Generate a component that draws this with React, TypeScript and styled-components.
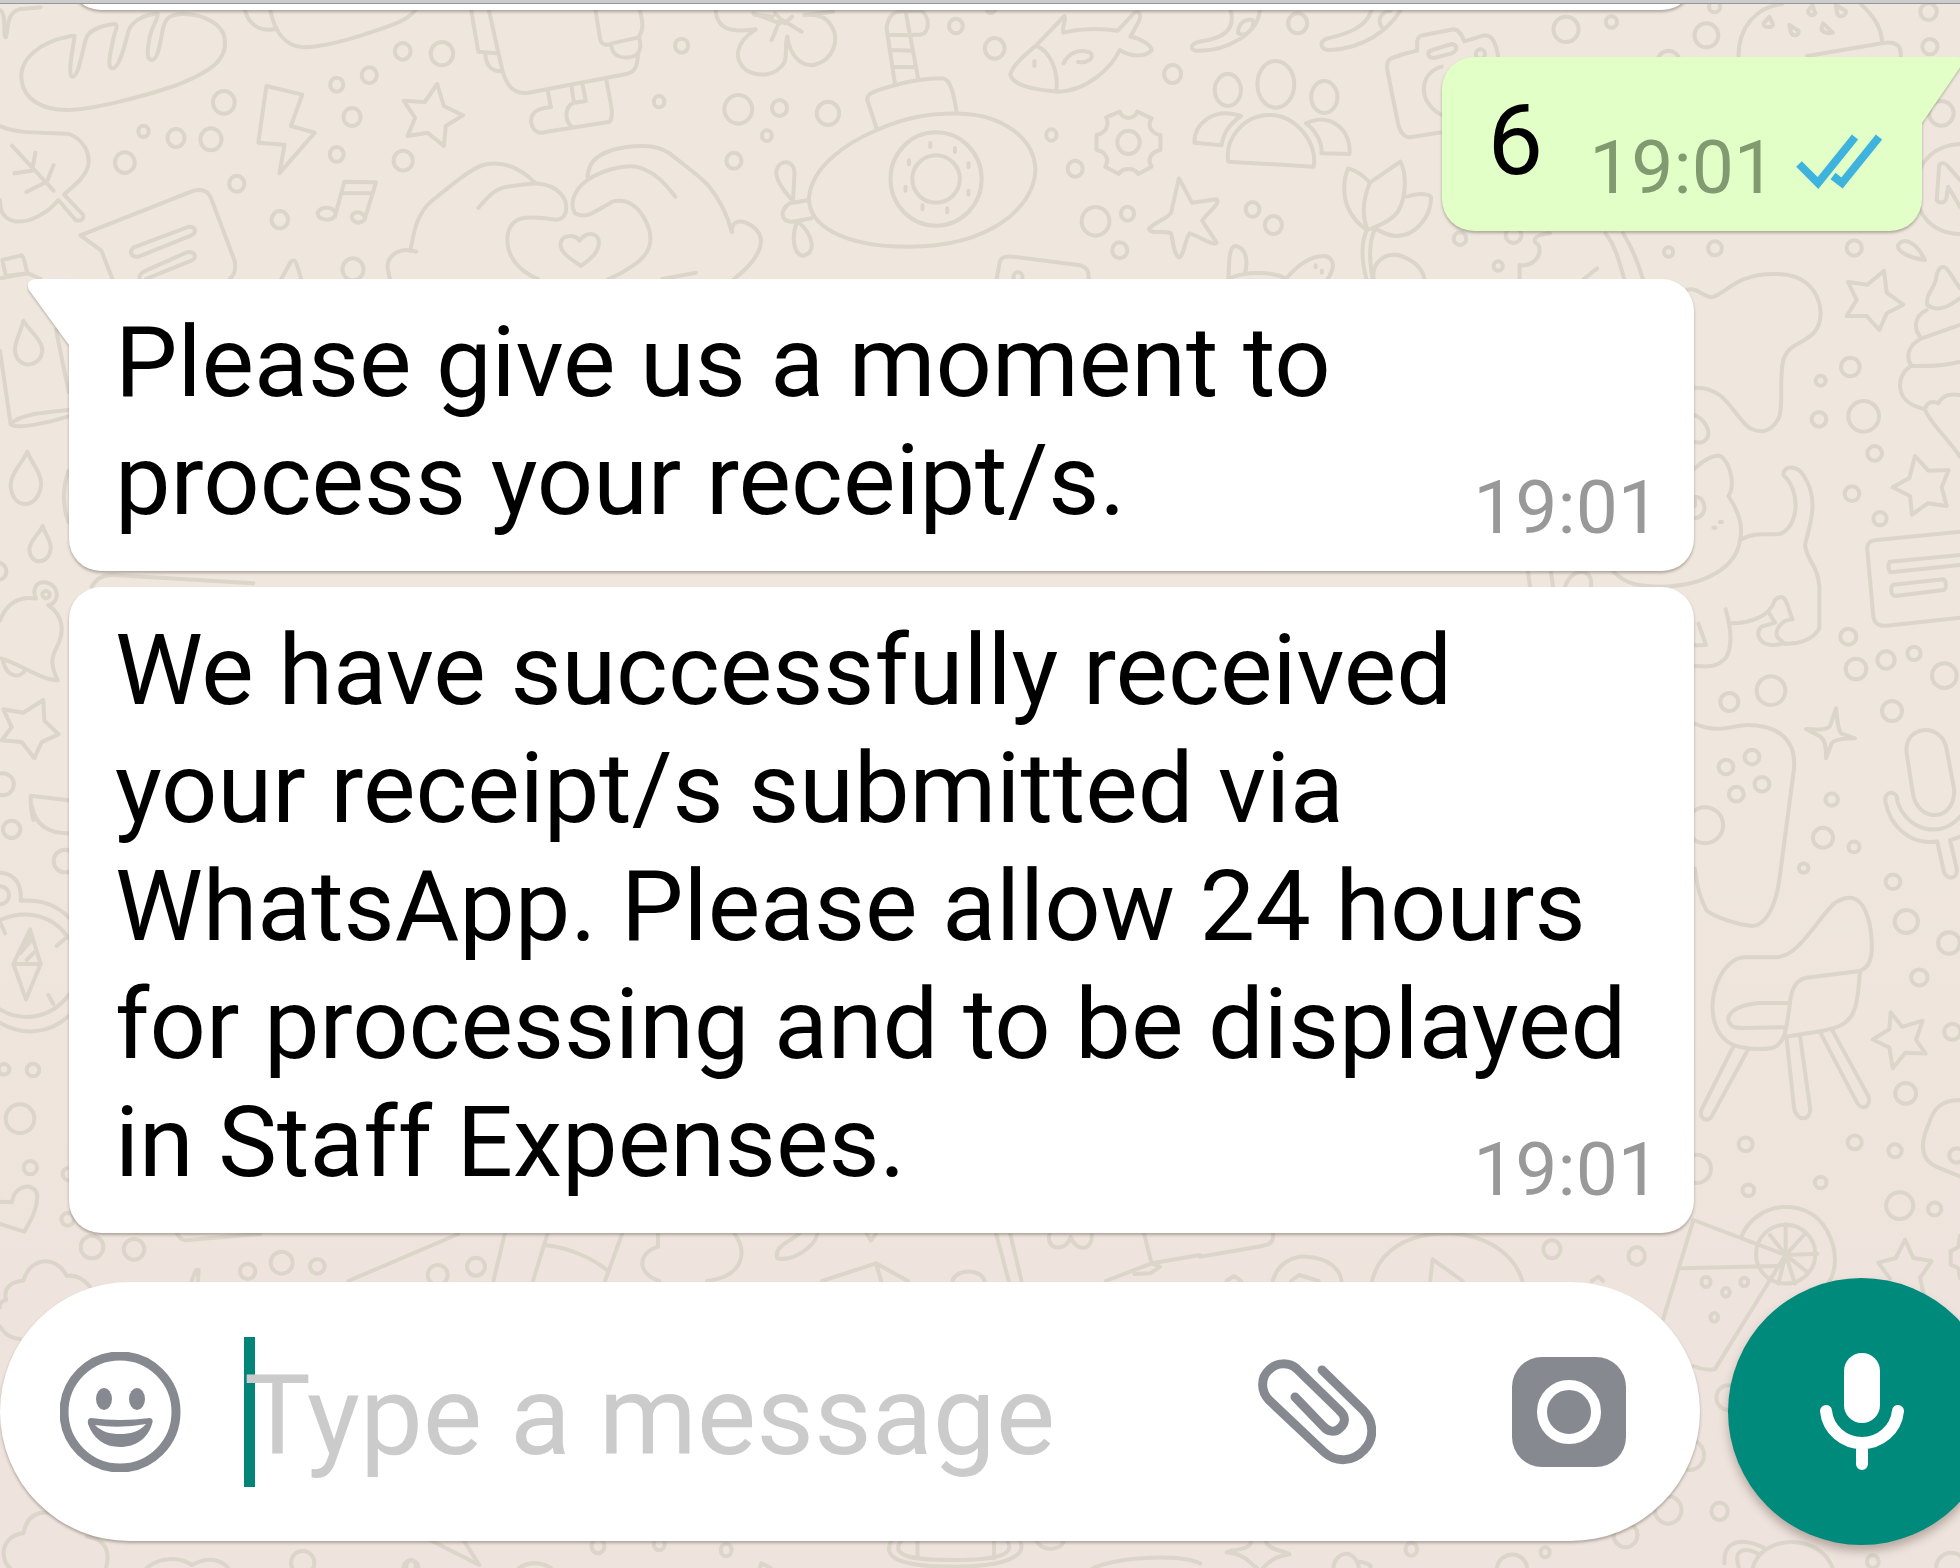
import React from "react";
import styled, { createGlobalStyle } from "styled-components";

const GlobalStyle = createGlobalStyle`
  * { box-sizing: border-box; }
  body {
    margin: 0;
    font-family: Roboto, "Liberation Sans", sans-serif;
    background: #efe6dd;
  }
`;

/* ---------- wallpaper ---------- */

type Bubble = [x: number, y: number, r: number];

interface Patch {
  x: number;
  y: number;
  sx: number;
  sy: number;
  lines: string[];
  bubbles: Bubble[];
}

const T = 1 / 3;

const patches: Patch[] = [
  {
    x: 0, y: 0, sx: 0.4783, sy: T,
    lines: [
      "M150 108C80 125 40 180 45 240C50 300 90 330 140 330C190 330 300 290 370 255C440 215 475 180 470 120C468 70 420 40 380 42C350 44 345 60 340 90C335 130 330 180 318 180C306 180 308 150 312 120C316 80 330 60 330 42C300 42 275 65 268 95C262 130 250 205 235 205C222 205 232 150 238 110C241 90 250 72 238 72C205 78 185 95 180 115C172 150 165 230 152 230C140 230 152 150 156 108Z",
      "M0 30C15 40 5 110 12 112C18 90 12 40 40 28L85 22",
      "M512 30C520 75 545 95 572 88M565 30C572 80 590 140 635 142C690 140 760 105 810 80C850 60 860 45 870 28",
      "M557 258L632 284L608 378L658 398L584 520L595 434L540 428Z",
      "M914 252L928 318L968 346L932 378L928 438L894 398L852 408L868 354L844 302L888 306Z",
      "M985 30L1000 155L1038 160M1022 30L1050 210C1058 250 1070 285 1105 278L1310 222C1330 215 1332 195 1334 165M1015 162C1015 190 1025 215 1048 214M1245 30L1255 120C1258 135 1270 138 1280 130L1335 112C1350 80 1340 50 1338 30M1278 136C1280 165 1295 175 1315 172C1340 168 1342 140 1336 112",
      "M1145 272L1152 322C1120 325 1110 340 1110 365C1115 395 1125 402 1140 396L1275 365C1285 345 1275 300 1268 242M1195 262L1200 308C1180 320 1180 360 1195 380M1218 255L1225 303L1200 308",
      "M0 378C40 405 100 395 145 402C175 420 190 460 184 500C175 540 150 560 134 584L174 645C175 660 168 664 158 660L122 600C100 640 60 670 30 664C5 655 0 630 0 600M25 437L112 572M74 458L67 512L30 520M112 495L98 545L55 576",
      "M235 837L212 752L168 706L405 572C425 565 435 575 440 590L490 780C495 810 490 825 480 837M280 742L395 680C412 680 410 700 400 706L290 770C272 772 270 752 280 742ZM292 837C290 825 295 818 305 812L392 756C410 755 412 775 400 782L305 837",
      "M5 780L45 766C52 770 52 800 58 820L12 828ZM0 835L58 820C70 825 75 832 85 837",
      "M700 650L720 545L786 547L762 660M714 580L774 580M700 650C690 665 665 660 664 640C668 620 695 615 702 640M762 660C745 680 730 655 738 642C748 630 762 640 763 655",
      "M588 837L608 785C614 778 618 782 620 792L630 837M1385 837L1455 818",
      "M858 752C865 700 870 640 905 600C940 560 980 510 1010 495C1050 480 1085 500 1120 550C1170 555 1190 600 1182 640C1175 665 1160 660 1140 655C1100 648 1070 650 1062 700C1055 760 1080 810 1125 837M1000 624C1020 590 1035 565 1060 560C1085 555 1105 552 1120 550M870 755C840 740 812 760 810 800L815 837",
      "M1228 530C1232 490 1240 470 1280 450C1320 435 1370 430 1400 460C1430 495 1460 525 1480 555C1500 590 1520 640 1530 695M1228 540C1260 510 1300 495 1330 500C1370 515 1390 550 1412 590M1228 540C1200 570 1190 610 1202 640C1225 660 1250 630 1280 605C1310 595 1330 615 1345 650C1370 710 1365 760 1320 800C1305 815 1285 830 1272 837",
      "M1215 798C1190 775 1170 755 1172 730C1175 705 1200 700 1212 722C1225 695 1250 695 1252 725C1252 760 1235 775 1215 798Z",
    ],
    bubbles: [
      [842, 154, 28], [924, 161, 38], [772, 226, 27], [704, 254, 24], [736, 351, 30], [704, 463, 25],
      [843, 482, 33], [468, 307, 37], [300, 394, 20], [368, 414, 30], [441, 418, 36], [261, 488, 34],
      [495, 551, 27], [585, 659, 29], [738, 808, 36], [1425, 137, 24], [1378, 305, 20],
    ],
  },
  {
    x: 700, y: 0, sx: 0.4847, sy: T,
    lines: [
      "M32 30C35 80 55 100 115 88C70 130 70 180 95 210C125 235 160 225 175 185C180 150 175 130 180 110C185 160 205 200 235 195C275 180 290 120 270 75C260 50 240 42 215 45L275 35M165 60L148 120M170 60L210 95M112 44L150 50M155 40L175 70L190 50M110 40L165 70",
      "M402 250L385 85C388 45 400 33 420 34L455 32C475 45 475 100 455 104L440 104M425 40L450 236M390 104L440 106M395 150L440 152M400 200L446 202",
      "M365 388L345 300C345 285 350 280 365 272C410 250 460 235 500 235C520 238 525 300 530 340",
      "M225 590C232 500 300 430 365 390C420 355 470 338 540 341C620 345 690 410 692 510C690 620 600 740 430 740C300 740 222 680 225 590Z",
      "M393 537A94 140 0 1 1 581 537A94 140 0 1 1 393 537ZM438 537A49 71 0 1 1 536 537A49 71 0 1 1 438 537Z",
      "M475 429v12M526 444v12M554 490v12M554 572v12M510 625v12M459 616v12M424 560v12M431 481v12M690 184v14",
      "M190 600C165 560 155 530 158 510C165 475 195 480 195 520L192 600M225 600L185 610C165 630 165 665 190 665L230 655M200 668C190 700 190 760 212 768C240 760 235 710 205 668",
      "M693 137L752 48C757 60 745 85 750 98C780 85 830 85 862 92L895 40C905 30 912 40 905 65L888 110C910 115 930 135 932 150C920 172 890 172 866 150C850 200 800 275 735 275C710 270 650 265 640 225C645 195 670 165 693 137C725 155 740 220 735 275M750 190C760 160 780 145 805 158C815 175 800 190 780 186",
      "M1095 32C1105 90 1080 115 1030 125C1010 132 1010 155 1030 152C1090 152 1150 100 1155 32M1110 100C1110 70 1125 55 1140 60C1145 80 1135 100 1120 105ZM1385 32C1375 80 1340 100 1295 115C1275 125 1280 150 1300 150C1370 145 1420 90 1445 32M1408 85C1395 60 1405 35 1425 32",
      "M866 335C872 360 896 360 902 335L932 355C922 375 930 400 950 405L950 450C930 455 922 480 932 500L904 522C896 502 872 502 864 522L836 500C845 480 838 455 818 450L818 405C838 400 845 375 838 352Z",
      "M1062 270A27 48 0 1 1 1116 270A27 48 0 1 1 1062 270ZM1150 253A38 70 0 1 1 1226 253A38 70 0 1 1 1150 253ZM1261 291A27 48 0 1 1 1315 291A27 48 0 1 1 1261 291Z",
      "M1090 485C1082 420 1120 345 1175 345C1230 345 1275 430 1266 500ZM1020 428C1020 370 1060 320 1116 348C1090 375 1080 400 1076 436ZM1250 370C1300 335 1345 390 1340 462L1282 460C1285 430 1270 390 1250 370Z",
      "M1530 397L1465 412C1450 412 1444 395 1440 370L1418 210C1415 178 1425 172 1444 167",
      "M988 535L1015 608L1066 598C1075 612 1045 640 1036 662L1066 728C1060 740 1030 708 1010 700C1000 720 998 770 988 772C978 765 975 720 972 700C955 690 930 705 926 686C940 665 965 655 972 638Z",
      "M1382 548L1445 485C1458 520 1458 590 1440 635C1425 665 1395 680 1378 690C1362 640 1370 590 1382 548C1365 520 1350 510 1337 505C1322 560 1325 640 1376 690M1458 590C1480 578 1500 580 1508 590C1510 640 1480 710 1435 708C1415 705 1400 690 1396 688M1376 690C1362 730 1366 790 1375 837M1392 690C1378 730 1382 790 1388 837M1390 837C1385 790 1410 760 1440 765C1475 780 1490 805 1495 837",
      "M1090 837C1092 790 1090 740 1105 738C1130 745 1130 790 1124 820M1090 837C1120 815 1175 812 1210 835C1230 800 1260 765 1290 768C1315 780 1305 815 1295 837M1270 796v6M1283 812v6",
      "M612 837L618 790C620 770 630 768 645 770L780 795C800 800 802 815 802 837",
      "M66 695C65 665 80 660 95 668C130 690 135 730 110 780C95 810 80 825 70 837",
    ],
    bubbles: [
      [79, 328, 46], [164, 324, 27], [264, 340, 38], [138, 407, 19], [70, 482, 27], [528, 78, 25],
      [608, 145, 34], [975, 222, 30], [1233, 70, 33], [725, 405, 20], [774, 506, 27], [816, 664, 46],
      [882, 641, 24], [866, 751, 27], [1140, 628, 25], [1183, 675, 30], [884, 427, 38], [656, 832, 18],
      [600, 24, 18],
    ],
  },
  {
    x: 1400, y: 0, sx: 0.3571, sy: T,
    lines: [
      "M0 165L48 152L48 125C50 110 55 108 65 106L150 88C168 90 175 110 180 124L235 106C260 105 268 130 275 168M117 200C50 220 50 310 117 345M90 150L145 132C162 135 162 152 145 160L95 174C75 172 75 155 90 150Z",
      "M948 168C948 80 1000 20 1070 12M1290 12C1330 50 1350 90 1350 130L1140 168M1350 130C1385 122 1405 135 1402 168",
      "M1035 50L1045 75C1040 85 1015 82 1018 70ZM1155 15L1163 40C1155 50 1142 45 1143 32ZM1220 15L1248 32C1252 48 1230 55 1225 42ZM1090 75L1116 92C1118 108 1100 110 1095 98ZM1185 70L1212 98C1200 102 1180 98 1180 85Z",
      "M1568 432C1500 435 1450 480 1445 560C1440 640 1490 700 1568 702M1503 600L1510 495C1515 485 1530 490 1535 500L1568 540M1503 600C1510 612 1525 610 1530 595L1535 560L1568 620",
      "M420 700C370 705 370 725 388 735C400 770 370 800 335 795L335 837M575 700C605 740 615 790 628 837M625 700C650 745 668 790 680 837M515 837L552 805",
      "M1470 780C1430 775 1390 755 1395 735C1405 715 1440 715 1470 780Z",
    ],
    bubbles: [
      [225, 162, 17], [465, 88, 41], [592, 66, 20], [881, 20, 20], [858, 106, 39], [1480, 35, 28],
      [1484, 140, 26], [752, 185, 36], [1516, 340, 40], [168, 716, 22], [318, 705, 27], [275, 798, 17],
      [752, 756, 17], [882, 745, 24], [1272, 744, 26],
    ],
  },
  {
    x: 1660, y: 230, sx: T, sy: T,
    lines: [
      "M80 180C110 170 130 200 155 202C200 190 230 130 345 132C440 130 480 190 482 250C480 350 380 320 368 400C358 460 370 520 358 560C335 610 300 610 270 595C220 560 200 470 105 473",
      "M672 122L680 188L730 224L680 250L658 300L620 258L560 258L590 210L564 156L622 164Z",
      "M900 175L860 115C845 105 835 115 830 135C828 175 795 190 802 225C830 245 860 235 900 205M800 240C760 260 760 300 785 325L900 285M785 325C745 345 735 380 755 408C800 408 850 410 900 395M750 410C705 440 710 510 770 530L795 538C800 515 820 512 835 520C850 495 870 490 900 495M795 538C810 580 860 620 900 680",
      "M105 715C130 690 165 670 185 680C215 710 225 770 205 798C240 850 250 890 240 930C230 1010 140 1065 10 1070M240 930C290 900 330 920 365 910C420 880 420 780 370 735C370 705 410 705 430 735C480 810 450 880 435 945C440 990 475 1010 478 1070L478 1195C460 1230 410 1245 370 1240C300 1260 280 1210 305 1190L345 1178L325 1145M213 1180C270 1180 330 1160 345 1110C380 1080 380 1130 398 1168C360 1170 340 1205 355 1225L375 1242M197 1138C215 1200 215 1250 200 1280C175 1310 150 1312 105 1308M115 1180L138 1245L105 1246",
      "M105 555C150 580 160 630 120 638L105 636M105 800C140 800 145 860 105 865M105 810v18M160 893h6M180 876h6",
      "M765 678L805 722L866 720L845 772L860 828L803 820L756 854L750 798L698 772L748 744Z",
      "M900 905L650 930C625 932 620 945 622 960L640 1160C645 1185 660 1188 680 1187L900 1163M900 975L690 995C683 1000 685 1025 692 1027L900 1005M700 1064L850 1048C860 1052 860 1075 852 1080L705 1098C692 1095 690 1070 700 1064Z",
      "M-396 1025L-390 1070M-327 1025L-321 1070M-285 1070C-265 1010 -200 1010 -207 1070M-140 1025C-100 1065 -60 1070 10 1070",
    ],
    bubbles: [
      [571, 411, 31], [482, 452, 18], [477, 568, 25], [611, 559, 49], [644, 670, 25], [576, 791, 25],
      [660, 866, 23], [565, 1220, 27], [588, 1317, 34], [678, 1290, 29], [762, 1270, 23], [853, 1337, 40],
      [333, 1382, 46], [208, 1416, 30], [696, 1443, 33],
    ],
  },
  {
    x: 1660, y: 700, sx: T, sy: 0.3827,
    lines: [
      "M105 62C180 90 220 65 260 65C350 65 410 100 402 180L358 470C345 550 310 595 270 590C230 585 170 570 140 550C120 520 110 490 105 440",
      "M528 22C532 60 535 80 545 88L585 100C540 100 520 105 514 115L498 152C498 120 495 105 480 95L438 76C480 78 500 78 510 68Z",
      "M740 140C730 60 850 60 860 130L882 230C890 320 770 325 758 240ZM900 358L870 366L890 440C895 470 860 470 852 450L832 370C750 380 690 330 676 265C672 235 715 235 712 265C740 340 840 365 900 305",
      "M250 672L350 672C420 670 480 560 525 530C570 505 610 510 630 590C640 650 640 695 600 708L440 726C410 730 395 750 390 790C380 860 375 905 330 910C290 915 250 910 220 902C170 880 155 840 158 790C165 720 210 675 250 672ZM600 708C595 770 590 800 575 825C550 855 520 858 485 865L378 880M385 792L300 792C250 795 205 810 205 835C210 855 225 857 250 857L375 855",
      "M222 902L125 1070C115 1095 145 1105 155 1088L265 912M380 885L402 1065C410 1105 455 1100 450 1065L420 878M480 868L590 1050C605 1075 635 1065 625 1035L515 860",
      "M692 816L726 854L788 838L768 888L797 924L736 922L698 962L688 908L638 887L688 860Z",
      "M900 1045C840 1045 820 1070 805 1110C780 1160 780 1200 830 1220L900 1245",
      "M245 1400C290 1310 440 1295 500 1385C535 1440 530 1490 505 1525M377 1450V1370M377 1450L432 1398M377 1450L472 1447M377 1450L442 1495M377 1450L405 1525M377 1450L355 1525M377 1450L330 1398",
      "M790 1550L780 1510L815 1466L760 1458L735 1410L708 1458L655 1470L690 1512",
      "M900 1400L895 1430L872 1440V1475L895 1485L900 1510",
    ],
    bubbles: [
      [135, 327, 50], [198, 175, 22], [276, 149, 22], [229, 246, 22], [306, 220, 22], [515, 260, 19],
      [489, 360, 29], [582, 384, 17], [431, 439, 15], [699, 475, 22], [739, 579, 33], [867, 635, 31],
      [778, 725, 24], [877, 867, 24], [737, 1028, 30], [257, 1161, 21], [584, 1156, 21], [705, 1178, 20],
      [482, 1261, 18], [265, 1281, 18], [110, 1225, 40], [719, 1321, 38], [824, 1330, 20], [890, 1190, 22],
      [377, 1448, 80],
    ],
  },
  {
    x: 0, y: 260, sx: T, sy: 0.3571,
    lines: [
      "M0 255L32 460M168 195L206 370M32 460C60 430 150 425 206 420M32 460C50 475 150 455 206 438",
      "M70 170C90 200 128 225 127 255C120 305 50 305 45 255C42 230 62 205 70 170ZM82 537C95 570 125 595 123 630C115 700 38 700 32 635C30 600 65 570 82 537ZM128 745C135 770 155 785 152 810C145 855 90 855 88 810C90 785 115 770 128 745Z",
      "M0 1010C20 960 60 940 108 948C95 920 110 900 138 903C180 910 180 960 145 967C190 995 195 1040 170 1085C150 1120 155 1140 173 1177C120 1175 60 1130 0 1115M8 1120C20 1170 60 1175 78 1145",
      "M130 1232L133 1290L176 1328L125 1350L103 1395L65 1350L5 1345L35 1308L10 1258L70 1268Z",
      "M206 1513L92 1500C92 1530 94 1550 100 1568M206 590C185 640 190 700 206 735M275 915C290 890 310 880 340 882L760 905",
    ],
    bubbles: [[138, 937, 13], [-8, 872, 28], [8, 1468, 34]],
  },
  {
    x: 0, y: 800, sx: T, sy: T,
    lines: [
      "M96 20C105 70 140 100 206 100M0 218C50 220 65 260 62 302C120 298 170 315 206 352M0 360C60 335 150 330 206 415M0 628C60 665 150 660 206 585M0 668C70 710 150 700 206 648",
      "M90 388L122 492L78 598L40 492ZM40 492H122M60 460L95 420M80 480L105 455M70 445L92 400M0 365L15 400M170 438L200 412M145 585L160 612",
      "M0 1205L36 1207C42 1150 110 1145 112 1190C110 1240 85 1270 73 1295L0 1272",
    ],
    bubbles: [
      [35, 88, 29], [195, 183, 37], [0, 286, 30], [12, 808, 19], [99, 810, 22], [60, 956, 46],
      [91, 1103, 23], [207, 1122, 22], [203, 1258, 22], [276, 1341, 37], [402, 1348, 34],
    ],
  },
  {
    x: 0, y: 1220, sx: T, sy: T,
    lines: [
      "M270 200C240 165 215 165 200 168C170 105 90 110 70 182C30 185 10 205 18 240C0 245 0 250 0 262M0 320C15 345 35 355 60 357",
      "M530 38C540 60 550 62 565 60L780 42M575 183L588 150L596 150L594 183M1045 183L1375 42",
      "M70 940C80 890 110 875 145 878M68 940C30 945 5 975 12 1010C15 1030 25 1040 30 1044M260 950C320 955 330 1000 318 1044M440 1044C480 1010 540 1010 575 1035C620 1010 660 1015 685 1044M1290 960L1438 1035L1390 960",
    ],
    bubbles: [
      [743, 154, 26], [845, 128, 36], [952, 139, 25], [1313, 165, 33], [1428, 140, 30], [908, 1028, 38],
      [1233, 1044, 26],
    ],
  },
  {
    x: 200, y: 1210, sx: 0.6378, sy: T,
    lines: [
      "M460 213L478 70M522 213L545 70M540 105C590 115 625 160 638 180M635 213L662 70M718 70L718 110C685 130 685 190 720 213M838 70C860 130 850 200 795 213M940 70C920 100 900 110 905 145C930 155 965 110 968 70M1045 70L1052 92L1060 70M975 213L1060 160L1110 213M1060 160L1068 213M1248 70L1268 213M1270 70L1288 213M1332 70C1325 125 1360 125 1365 80C1375 130 1400 120 1398 75M1480 70L1492 160L1568 135M1420 213L1492 160L1505 170L1490 190L1465 192M1180 213C1185 175 1225 175 1230 213",
      "M1085 990C1065 1050 1110 1070 1180 1070C1260 1070 1300 1040 1285 990M1100 990C1080 1040 1120 1050 1180 1050C1250 1050 1280 1035 1265 990M1125 990V1045M1245 990V1045M500 1074C515 1055 535 1055 550 1074M1400 1074C1450 1035 1540 1035 1568 1060M1310 990C1320 1025 1350 1025 1355 990M878 1074L880 1060L895 1074",
    ],
    bubbles: [[624, 1008, 25], [720, 1002, 22], [825, 1020, 22], [331, 1068, 20]],
  },
  {
    x: 1200, y: 1220, sx: 0.4847, sy: T,
    lines: [
      "M150 38C155 70 140 75 120 80L0 110M150 183C160 130 190 108 220 110C265 112 290 150 292 183M355 183C370 90 430 40 510 40C600 45 650 110 665 183M475 183L480 118L542 183M188 183L205 165L245 183M808 183L822 170L832 183M55 183L70 168L85 183",
      "M1018 0L1208 105L1062 448C1045 452 1030 445 1018 438M1018 0L955 300M990 145L1190 138",
      "M1140 1044C1160 940 1280 940 1305 1044M1165 985C1120 950 1080 960 1082 1030M1150 1000C1120 980 1100 990 1112 1044",
      "M105 962C110 990 60 990 55 997C100 1005 100 1030 118 1044M135 962C140 990 180 995 185 1003C150 1010 140 1030 130 1044M275 1044C280 990 320 985 328 1044M330 1025C350 1030 355 1040 352 1044M612 1044C620 990 670 990 675 1044",
    ],
    bubbles: [
      [726, 88, 30], [901, 108, 29], [1044, 186, 18], [1123, 186, 16], [1085, 217, 16], [1061, 292, 16],
      [1090, 533, 40], [1010, 705, 48], [966, 870, 44], [1072, 874, 29], [878, 945, 40], [1388, 1025, 22],
      [436, 988, 22], [712, 997, 18], [1550, 1045, 50],
    ],
  },
];

const WallpaperSvg = styled.svg`
  position: absolute;
  inset: 0;
  width: 100%;
  height: 100%;
  fill: none;
  stroke: #dbd5ca;
  stroke-width: 4;
  stroke-linecap: round;
  stroke-linejoin: round;

  path,
  ellipse {
    vector-effect: non-scaling-stroke;
  }
`;

function Wallpaper() {
  return (
    <WallpaperSvg viewBox="0 0 1960 1568" preserveAspectRatio="xMidYMid slice" aria-hidden="true">
      {patches.map((p) => (
        <g key={`${p.x}-${p.y}`} transform={`translate(${p.x} ${p.y}) scale(${p.sx} ${p.sy})`}>
          {p.lines.map((d) => (
            <path key={d} d={d} />
          ))}
          {p.bubbles.map(([cx, cy, r]) => (
            <ellipse key={`${cx}-${cy}`} cx={cx} cy={cy} rx={(r * p.sy) / p.sx - 3} ry={r - 3} />
          ))}
        </g>
      ))}
    </WallpaperSvg>
  );
}

/* ---------- layout ---------- */

const Screen = styled.div`
  position: relative;
  display: flex;
  flex-direction: column;
  min-height: 100vh;
  overflow: hidden;
  background: linear-gradient(#efe7dd, #efe6dd 50%, #eee3dd);
`;

const TopEdge = styled.header`
  position: relative;
  height: 4px;
  background: #cccccc;
  border-bottom: 1px solid #94989b;
`;

const Conversation = styled.main`
  position: relative;
  display: flex;
  flex-direction: column;
  flex: 1;
`;

const bubbleShadow = "0 2px 3px rgba(80, 70, 60, 0.4)";

const Clipped = styled.div`
  display: flex;
  flex-direction: column;
  justify-content: flex-end;
  height: 12px;
  padding: 0 266px 6px 69px;
  overflow: hidden;
`;

const EarlierMessage = styled.div`
  flex: none;
  height: 80px;
  border-radius: 32px;
  background: #ffffff;
  box-shadow: ${bubbleShadow};
`;

const MessageList = styled.ol`
  display: flex;
  flex-direction: column;
  margin: 0;
  padding: 41px 38px 0 69px;
  list-style: none;
`;

const Row = styled.li<{ $mine?: boolean; $gap: number }>`
  display: flex;
  justify-content: ${(p) => (p.$mine ? "flex-end" : "flex-start")};
  margin-bottom: ${(p) => p.$gap}px;
  padding-right: ${(p) => (p.$mine ? 0 : 228)}px;
`;

const Bubble = styled.article<{ $mine?: boolean; $tail?: boolean }>`
  position: relative;
  flex: ${(p) => (p.$mine ? "none" : 1)};
  padding: 24px ${(p) => (p.$mine ? 40 : 34)}px 26px 46px;
  border-radius: 32px;
  border-top-left-radius: ${(p) => (p.$tail && !p.$mine ? 0 : 32)}px;
  border-top-right-radius: ${(p) => (p.$tail && p.$mine ? 0 : 32)}px;
  background: ${(p) => (p.$mine ? "#e1ffc7" : "#ffffff")};
  box-shadow: ${bubbleShadow};
`;

const Tail = styled.svg<{ $mine?: boolean }>`
  position: absolute;
  top: 0;
  ${(p) => (p.$mine ? "left: 100%;" : "right: 100%;")}
  width: 42px;
  height: 68px;
  overflow: visible;
  fill: ${(p) => (p.$mine ? "#e1ffc7" : "#ffffff")};
  filter: drop-shadow(0 2px 1px rgba(80, 70, 60, 0.3));
  clip-path: ${(p) => (p.$mine ? "inset(0 -4px -4px 0)" : "inset(0 0 -4px -4px)")};
`;

const Body = styled.div`
  display: flow-root;
  color: #000000;
  font-size: 99px;
  line-height: 118px;
`;

const Meta = styled.span<{ $mine?: boolean }>`
  float: right;
  display: flex;
  align-items: center;
  gap: 20px;
  height: 76px;
  margin: 48px 0 0 46px;
  color: ${(p) => (p.$mine ? "#829a70" : "#999999")};
  font-size: 75px;
  line-height: 76px;
`;

/* ---------- composer ---------- */

const Composer = styled.form`
  position: relative;
  display: flex;
  align-items: center;
  gap: 28px;
  margin-right: -35px;
  padding-bottom: 23px;
`;

const Field = styled.div`
  display: flex;
  align-items: center;
  flex: 1;
  min-width: 0;
  height: 259px;
  padding: 0 74px 0 60px;
  border-radius: 130px;
  background: #ffffff;
  box-shadow: ${bubbleShadow};
`;

const IconButton = styled.button`
  flex: none;
  display: flex;
  margin: 0;
  padding: 0;
  border: 0;
  background: none;
  color: #868a90;

  & + & {
    margin-left: 136px;
  }
`;

const Caret = styled.span`
  flex: none;
  width: 11px;
  height: 150px;
  margin: 0 -11px 0 62px;
  background: #008577;
`;

const MessageInput = styled.input`
  position: relative;
  flex: 1;
  min-width: 0;
  height: 150px;
  margin: 0;
  padding: 8px 0 0;
  border: 0;
  outline: 0;
  background: transparent;
  color: #000000;
  caret-color: #008577;
  font: 112px/142px Roboto, "Liberation Sans", sans-serif;

  &::placeholder {
    color: #cbcbcb;
    opacity: 1;
  }
`;

const MicButton = styled.button`
  flex: none;
  display: flex;
  align-items: center;
  justify-content: center;
  width: 267px;
  height: 267px;
  margin: 0;
  padding: 0;
  border: 0;
  border-radius: 50%;
  background: #008a7c;
  color: #ffffff;
  box-shadow: 0 6px 10px rgba(80, 60, 50, 0.35);
`;

/* ---------- icons ---------- */

const SmileyIcon = () => (
  <svg width="122" height="120" viewBox="0 0 122 120" aria-hidden="true">
    <circle cx="60" cy="60" r="56" fill="none" stroke="currentColor" strokeWidth="9" />
    <ellipse cx="44" cy="47" rx="8" ry="11" fill="currentColor" />
    <ellipse cx="77" cy="47" rx="8" ry="11" fill="currentColor" />
    <path
      fill="currentColor"
      fillRule="evenodd"
      d="M31 66Q60 70 90 66Q94 67 92 72C88 86 76 95 60 95C44 95 33 86 28 72Q27 66 31 66ZM35 73C42 80 50 82 60 82C70 82 79 80 86 72Q60 77 35 73Z"
    />
  </svg>
);

const ClipIcon = () => (
  <svg width="118" height="106" viewBox="0 0 118 106" fill="none" stroke="currentColor" strokeWidth="9" strokeLinecap="round" aria-hidden="true">
    <path d="M64 11L105 51C116 62 117 80 106 91C95 103 78 104 66 93L11 41C3 33 2 19 11 11C19 3 31 3 39 10L81 51C88 57 88 64 82 69C77 74 70 73 65 67L37 38" />
  </svg>
);

const CameraIcon = () => (
  <svg width="114" height="110" viewBox="0 0 114 110" aria-hidden="true">
    <rect width="114" height="110" rx="30" fill="currentColor" />
    <circle cx="57" cy="55" r="27" fill="none" stroke="#ffffff" strokeWidth="10" />
  </svg>
);

const MicIcon = () => (
  <svg width="84" height="117" viewBox="0 0 84 117" aria-hidden="true">
    <rect x="24" width="36" height="70" rx="18" fill="currentColor" />
    <path
      d="M6 58C8 77 24 90 42 90C60 90 76 77 78 58M42 90V111"
      fill="none"
      stroke="currentColor"
      strokeWidth="12"
      strokeLinecap="round"
    />
  </svg>
);

const TicksSvg = styled.svg`
  margin-bottom: 10px;
  fill: none;
  stroke: #3eb3dd;
  stroke-width: 8px;
`;

const ReadTicks = () => (
  <TicksSvg width="86" height="56" viewBox="0 0 86 56" role="img" aria-label="Read">
    <path d="M3 30L22 49L59 3M37 42L46 49L83 3" />
  </TicksSvg>
);

/* ---------- content ---------- */

interface Message {
  id: number;
  text: string;
  time: string;
  mine?: boolean;
  tail?: boolean;
  gap: number;
}

const messages: Message[] = [
  { id: 1, text: "6", time: "19:01", mine: true, tail: true, gap: 48 },
  { id: 2, text: "Please give us a moment to process your receipt/s.", time: "19:01", tail: true, gap: 16 },
  {
    id: 3,
    text: "We have successfully received your receipt/s submitted via WhatsApp. Please allow 24 hours for processing and to be displayed in Staff Expenses.",
    time: "19:01",
    gap: 45,
  },
];

function BubbleTail({ mine }: { mine?: boolean }) {
  return (
    <Tail $mine={mine} viewBox="0 0 42 68" aria-hidden="true">
      <path d={mine ? "M0 0H34Q43 0 39 9L0 66Z" : "M42 0H8Q-2 2 2 11L42 66Z"} />
    </Tail>
  );
}

export default function App() {
  return (
    <>
      <GlobalStyle />
      <Screen>
        <Wallpaper />
        <TopEdge />
        <Conversation>
          <Clipped>
            <EarlierMessage />
          </Clipped>
          <MessageList>
            {messages.map((m) => (
              <Row key={m.id} $mine={m.mine} $gap={m.gap}>
                <Bubble $mine={m.mine} $tail={m.tail}>
                  {m.tail && <BubbleTail mine={m.mine} />}
                  <Body>
                    {m.text}
                    <Meta $mine={m.mine}>
                      <time>{m.time}</time>
                      {m.mine && <ReadTicks />}
                    </Meta>
                  </Body>
                </Bubble>
              </Row>
            ))}
          </MessageList>
        </Conversation>
        <Composer onSubmit={(e) => e.preventDefault()}>
          <Field>
            <IconButton type="button" aria-label="Emoji">
              <SmileyIcon />
            </IconButton>
            <Caret />
            <MessageInput type="text" aria-label="Message" placeholder="Type a message" />
            <IconButton type="button" aria-label="Attach">
              <ClipIcon />
            </IconButton>
            <IconButton type="button" aria-label="Camera">
              <CameraIcon />
            </IconButton>
          </Field>
          <MicButton type="button" aria-label="Record voice message">
            <MicIcon />
          </MicButton>
        </Composer>
      </Screen>
    </>
  );
}
